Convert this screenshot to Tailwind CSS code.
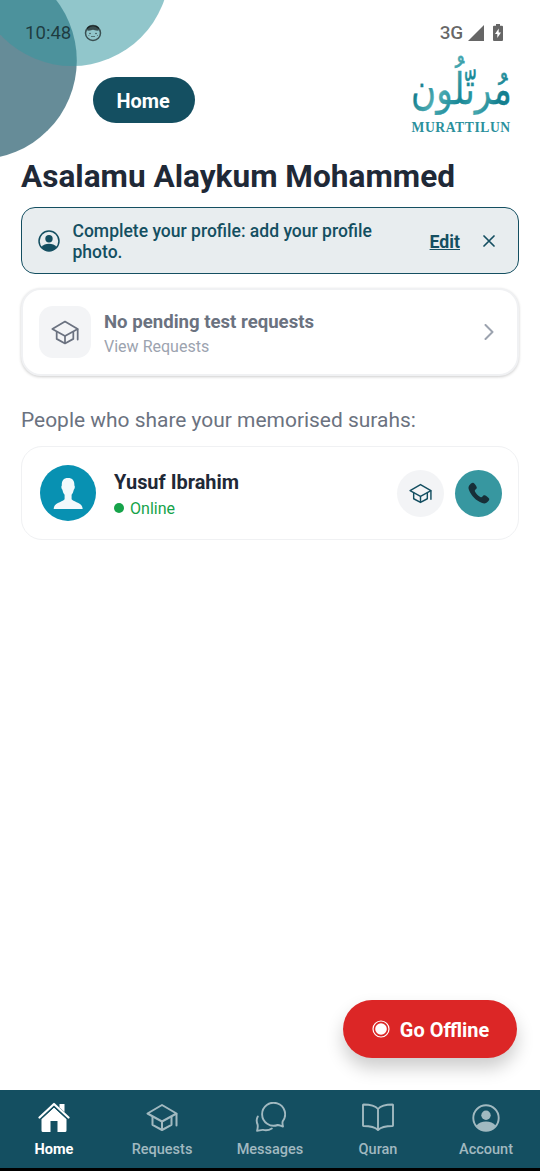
<!DOCTYPE html>
<html lang="en">
<head>
<meta charset="utf-8">
<meta name="viewport" content="width=device-width, initial-scale=1">
<title>Murattilun</title>
<script src="https://cdn.jsdelivr.net/npm/@tailwindcss/browser@4"></script>
</head>
<body class="bg-white font-['Roboto',sans-serif]">
<svg class="hidden">
  <symbol id="cap" viewBox="0 0 32 28">
    <g fill="none" stroke="currentColor" stroke-width="2" stroke-linejoin="round" stroke-linecap="round">
      <path d="M1.500 10 16 1.500 30.500 10 16 18z"/>
      <path d="M6.500 13.300v8l9.500 5.200 9.500-5.200v-8M16 18.500V26M30.500 10.500V22"/>
    </g>
  </symbol>
  <symbol id="person" viewBox="0 0 28 28">
    <circle cx="14" cy="14" r="12.7" fill="none" stroke="currentColor" stroke-width="1.9"/>
    <circle cx="14" cy="11.2" r="4.7" fill="currentColor"/>
    <path fill="currentColor" d="M4.500 21.500c2-2.500 5.500-4 9.500-4s7.500 1.500 9.500 4c-2 3.200-5.400 5.300-9.500 5.300s-7.500-2.100-9.500-5.300z"/>
  </symbol>
</svg>
<div class="relative flex h-[1171px] w-[540px] flex-col overflow-hidden bg-white">
  <svg class="absolute left-0 top-0" width="180" height="170">
    <circle cx="-22" cy="60.500" r="98.800" fill="#144f61" fill-opacity=".65"/>
    <circle cx="72" cy="-31.500" r="97.500" fill="#3797a0" fill-opacity=".55"/>
  </svg>

  <div class="relative flex h-[54px] shrink-0 items-center justify-between pl-[25px] pr-[37px] pt-[11px] text-black/60">
    <div class="flex items-center gap-[13px]">
      <span class="text-[18.600px] leading-6">10:48</span>
      <svg width="18" height="18" viewBox="0 0 18 18">
        <circle cx="9" cy="9" r="7.500" fill="none" stroke="currentColor" stroke-width="1.500"/>
        <path fill="currentColor" d="M3 4C4.500.8 13.500.8 15 4l-.5 2.800-2.500-.3-3-.7-3 .7-2.500.3z"/>
        <circle cx="6" cy="9.500" r=".8" fill="currentColor"/><circle cx="12" cy="9.500" r=".8" fill="currentColor"/>
        <path d="M7 12.500h4M4.500 11.500h.8M13 11.500h.8" stroke="currentColor" stroke-width=".7"/>
      </svg>
    </div>
    <div class="flex items-center">
      <span class="mr-[5px] text-[19px] font-medium leading-6 tracking-[-0.2px]">3G</span>
      <svg class="mr-[9px]" width="16" height="16" viewBox="0 0 16 16"><path fill="currentColor" d="M16 0v16H0z"/></svg>
      <svg width="10" height="17" viewBox="0 0 10 17"><path fill="currentColor" fill-rule="evenodd" d="M3 0h4v1.700h2q1 0 1 1V16q0 1-1 1H1q-1 0-1-1V2.700q0-1 1-1h2zM5.700 4.500 2 10h2.300v4L8 8.600H5.700z"/></svg>
    </div>
  </div>

  <div class="relative flex h-[86px] shrink-0 items-start justify-between pl-[93px] pr-[28px]">
    <div class="mt-[23px] flex h-[46px] w-[102px] items-center justify-center rounded-full bg-[#144f61] pr-[2px] pt-[3px] text-[19.900px] font-bold text-white">Home</div>
    <svg class="mt-px overflow-visible" width="102" height="80" viewBox="0 0 102 80">
      <defs><linearGradient id="teal" x1="0" y1="0" x2="1" y2="0.300">
        <stop offset="0" stop-color="#2e9aa6"/><stop offset=".2" stop-color="#127c8c"/><stop offset=".42" stop-color="#4fadb4"/><stop offset=".65" stop-color="#178796"/><stop offset=".85" stop-color="#45a7ae"/><stop offset="1" stop-color="#147f8f"/>
      </linearGradient></defs>
      <text transform="translate(51.500 49) scale(.9 1.140)" x="0" y="0" text-anchor="middle" direction="rtl" font-family="DejaVu Sans" font-size="38" fill="url(#teal)" stroke="url(#teal)" stroke-width=".3">مُرتّلُون</text>
      <text transform="translate(1.500 77) scale(.94 1)" x="0" y="0" textLength="105" font-family="Liberation Serif" font-weight="700" font-size="14.500" fill="#2b909c">MURATTILUN</text>
    </svg>
  </div>

  <main class="flex flex-1 flex-col px-[21px]">
    <h1 class="mt-[16px] h-[42px] text-[31.580px] font-bold leading-[42px] text-[#1f2937] whitespace-nowrap">Asalamu Alaykum Mohammed</h1>

    <div class="mt-[9px] flex h-[67px] shrink-0 items-center rounded-[14px] border-[1.500px] border-[#144f61] bg-[#e8edef] pl-4 pr-[23px] text-[#144f61]">
      <svg class="shrink-0" width="22" height="22"><use href="#person"/></svg>
      <p class="ml-[12.500px] w-[330px] pt-[3px] text-[17.530px] font-medium leading-[21px]">Complete your profile: add your profile photo.</p>
      <span class="ml-auto pt-[3px] text-[17.700px] font-bold underline">Edit</span>
      <svg class="ml-[23px]" width="12" height="12" viewBox="0 0 12 12"><path d="M1 1l10 10M11 1 1 11" stroke="currentColor" stroke-width="1.700" stroke-linecap="round"/></svg>
    </div>

    <div class="mt-[14px] flex h-[88px] shrink-0 items-center rounded-[20px] border-2 border-[#f0f1f3] bg-white pl-4 pr-[23px] shadow-[0_1px_3px_rgba(0,0,0,0.2)]">
      <div class="flex size-[52px] items-center justify-center rounded-[14px] bg-[#f3f4f6] text-[#6b7280]">
        <svg width="28" height="25"><use href="#cap"/></svg>
      </div>
      <div class="ml-[13px] flex flex-col pt-[4px]">
        <span class="text-[18.600px] font-bold leading-[24px] text-[#6b7280]">No pending test requests</span>
        <span class="text-[16.050px] leading-[25px] text-[#9ca3af]">View Requests</span>
      </div>
      <svg class="ml-auto" width="10" height="16" viewBox="0 0 10 16"><path d="M1.500 1 8.500 8l-7 7" fill="none" stroke="#9ca3af" stroke-width="2" stroke-linecap="round" stroke-linejoin="round"/></svg>
    </div>

    <h2 class="mt-[30px] h-[28px] text-[20.950px] leading-[28px] text-[#6b7280] whitespace-nowrap">People who share your memorised surahs:</h2>

    <div class="mt-[12px] flex h-[94px] shrink-0 items-center rounded-[21px] border-[1.500px] border-[#f0f1f3] bg-white pl-[18px] pr-[16px]">
      <svg width="56" height="56" viewBox="0 0 56 56">
        <circle cx="28" cy="28" r="28" fill="#0891b2"/>
        <path fill="#f2f9fc" d="M28 13c4.500 0 6.600 2.500 6.400 7.500.8.800.5 3.300-.6 4.200-.5 2.300-1.200 3.800-2.200 5v4.500c3.300 3.600 11.100 3.200 11.100 9.900H13.700c0-6.700 7.600-6.300 10.900-9.900v-4.500c-1.100-1.200-1.700-2.700-2.200-5-1.100-.9-1.400-3.400-.6-4.200C21.600 15.500 23.500 13 28 13z"/>
      </svg>
      <div class="ml-[18px] flex flex-col pt-[4px]">
        <span class="text-[19.950px] font-bold leading-[26px] text-[#1f2937]">Yusuf Ibrahim</span>
        <span class="flex items-center gap-[6px] text-[16.050px] leading-[27px] text-[#16a34a]"><i class="mb-[1px] size-[10px] rounded-full bg-[#16a34a]"></i>Online</span>
      </div>
      <div class="ml-auto flex gap-[11px]">
        <div class="flex size-[47px] items-center justify-center rounded-full bg-[#f3f4f6] text-[#144f61]"><svg width="23" height="21"><use href="#cap"/></svg></div>
        <div class="flex size-[47px] items-center justify-center rounded-full bg-[#3797a0] text-[#172f38]">
          <svg width="22" height="22" viewBox="0 0 22 22"><path fill="currentColor" d="M1.200 3.500C2.400 1.800 4.200.4 5.200.8c1.500.8 3 3 3.500 4.400.3 1-.3 1.600-1.200 2.300-.8.700-.9 1.200-.4 2.200 1 2 3.200 4.200 5.200 5.200 1 .5 1.500.4 2.200-.4.700-.9 1.300-1.500 2.300-1.200 1.400.5 3.600 2 4.400 3.500.4 1-1 2.800-2.700 4-1.200.8-2.700.9-4.300.3C8 18.800 3.200 14 .9 7.800.3 6.200.4 4.700 1.200 3.500z"/></svg>
        </div>
      </div>
    </div>

    <button class="mb-[32px] ml-auto mr-[2px] mt-auto flex h-[58px] w-[174px] items-center justify-center gap-[10px] rounded-full bg-[#dc2626] pl-[1px] text-[19.950px] font-bold text-white shadow-[0_10px_18px_rgba(0,0,0,0.2)]">
      <svg width="18" height="18" viewBox="0 0 18 18"><circle cx="9" cy="9" r="8" fill="none" stroke="#fff" stroke-width="1.200"/><circle cx="9" cy="9" r="5.800" fill="#fff"/></svg>
      <span class="pt-[4px]">Go Offline</span>
    </button>
  </main>

  <nav class="grid h-[81px] shrink-0 grid-cols-5 border-b-[3px] border-black bg-[#144f61] text-[14.500px] font-medium leading-[20px] text-[#a1b9c0]">
    <div class="flex flex-col items-center pt-3 font-bold text-white">
      <svg width="32" height="31" viewBox="0 0 32 31"><path fill="currentColor" d="M16 5.500 28.500 17v11.500q0 1.500-1.500 1.500h-7.500V19h-7v11H5q-1.500 0-1.500-1.500V17z"/><path d="M1.500 15.500 16 2l14.500 13.500" fill="none" stroke="currentColor" stroke-width="2.200" stroke-linecap="round" stroke-linejoin="round"/><path fill="currentColor" d="M21.500 2h5v8l-5-4.500z"/><path d="M3 17 16 5l13 12" fill="none" stroke="#144f61" stroke-width="1"/></svg>
      <span class="mt-[7px]">Home</span>
    </div>
    <div class="flex flex-col items-center pt-3">
      <svg class="my-px" width="32" height="29"><use href="#cap"/></svg>
      <span class="mt-[7px]">Requests</span>
    </div>
    <div class="flex flex-col items-center pt-3">
      <svg width="31" height="31" viewBox="0 0 31 31" fill="none" stroke="currentColor" stroke-width="1.900" stroke-linecap="round" stroke-linejoin="round"><path d="M28 24.500c-.5-2-.8-3.800-.3-5.200A11.500 11.500 0 1 0 22.700 23c1.600 0 3.300.9 5.300 1.500z"/><path d="M2.800 14.500C1.300 17 1.500 20 2.600 22.500c.4 1.900.1 4-.5 6.300 2.200-.2 4-1.200 6-.9 3 .6 6 .3 8.700-1.400"/></svg>
      <span class="mt-[7px]">Messages</span>
    </div>
    <div class="flex flex-col items-center pt-3">
      <svg width="32" height="31" viewBox="0 0 32 31" fill="none" stroke="currentColor" stroke-width="1.900" stroke-linejoin="round"><path d="M16 7C13.500 4 9 2.500 1.500 2.500q-.5 0-.5.500v20.500q0 .5.500.5C9 24 13 25 16 28c3-3 7-4 14.500-4q.5 0 .5-.5V3q0-.5-.5-.5C23 2.500 18.500 4 16 7zM16 7v21"/></svg>
      <span class="mt-[7px]">Quran</span>
    </div>
    <div class="flex flex-col items-center pt-3">
      <svg class="my-[1.500px]" width="28" height="28"><use href="#person"/></svg>
      <span class="mt-[7px]">Account</span>
    </div>
  </nav>
</div>
</body>
</html>
